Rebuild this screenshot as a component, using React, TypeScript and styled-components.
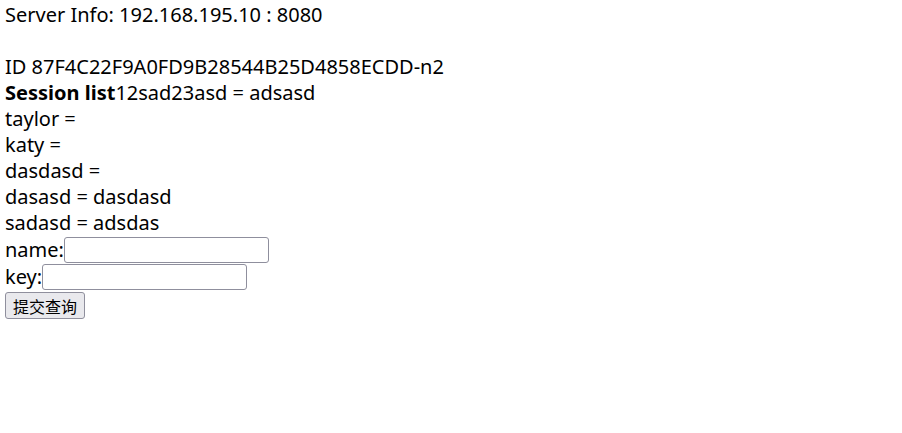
import React from "react";
import styled, { createGlobalStyle } from "styled-components";

const Global = createGlobalStyle`
  html, body { margin: 0; padding: 0; background: #fff; }
  body {
    padding: 2px 5px;
    font-family: "Noto Sans", "Noto Sans CJK SC", sans-serif;
    font-size: 20px;
    color: #000;
  }
`;

const Page = styled.div`
  display: flex;
  flex-direction: column;
`;

const Line = styled.div<{ $gapBefore?: boolean }>`
  line-height: 26px;
  white-space: nowrap;
  margin-top: ${(p) => (p.$gapBefore ? "26px" : "0")};
`;

const Bold = styled.b`
  font-weight: 700;
`;

const FormRow = styled.label`
  display: flex;
  align-items: center;
  height: 27px;
  line-height: 26px;
`;

const TextInput = styled.input`
  box-sizing: border-box;
  width: 205px;
  height: 26px;
  border: 1px solid #8f8f9d;
  border-radius: 3px;
  padding: 1px 2px;
  font-size: 14px;
  background: #fff;
  margin: 0;
`;

const Submit = styled.button`
  align-self: flex-start;
  box-sizing: border-box;
  height: 27px;
  padding: 0 7px;
  margin-top: 2px;
  border: 1px solid #8f8f9d;
  border-radius: 3px;
  background: #e9e9ed;
  font-family: "Noto Sans CJK SC", sans-serif;
  font-size: 16px;
  color: #000;
`;

const sessions = [
  "taylor =",
  "katy =",
  "dasdasd =",
  "dasasd = dasdasd",
  "sadasd = adsdas",
];

export default function App() {
  return (
    <Page>
      <Global />
      <Line>Server Info: 192.168.195.10 : 8080</Line>
      <Line $gapBefore>ID 87F4C22F9A0FD9B28544B25D4858ECDD-n2</Line>
      <Line>
        <Bold>Session list</Bold>12sad23asd = adsasd
      </Line>
      {sessions.map((s) => (
        <Line key={s}>{s}</Line>
      ))}
      <FormRow>
        name:<TextInput type="text" />
      </FormRow>
      <FormRow>
        key:<TextInput type="text" />
      </FormRow>
      <Submit type="submit">提交查询</Submit>
    </Page>
  );
}
